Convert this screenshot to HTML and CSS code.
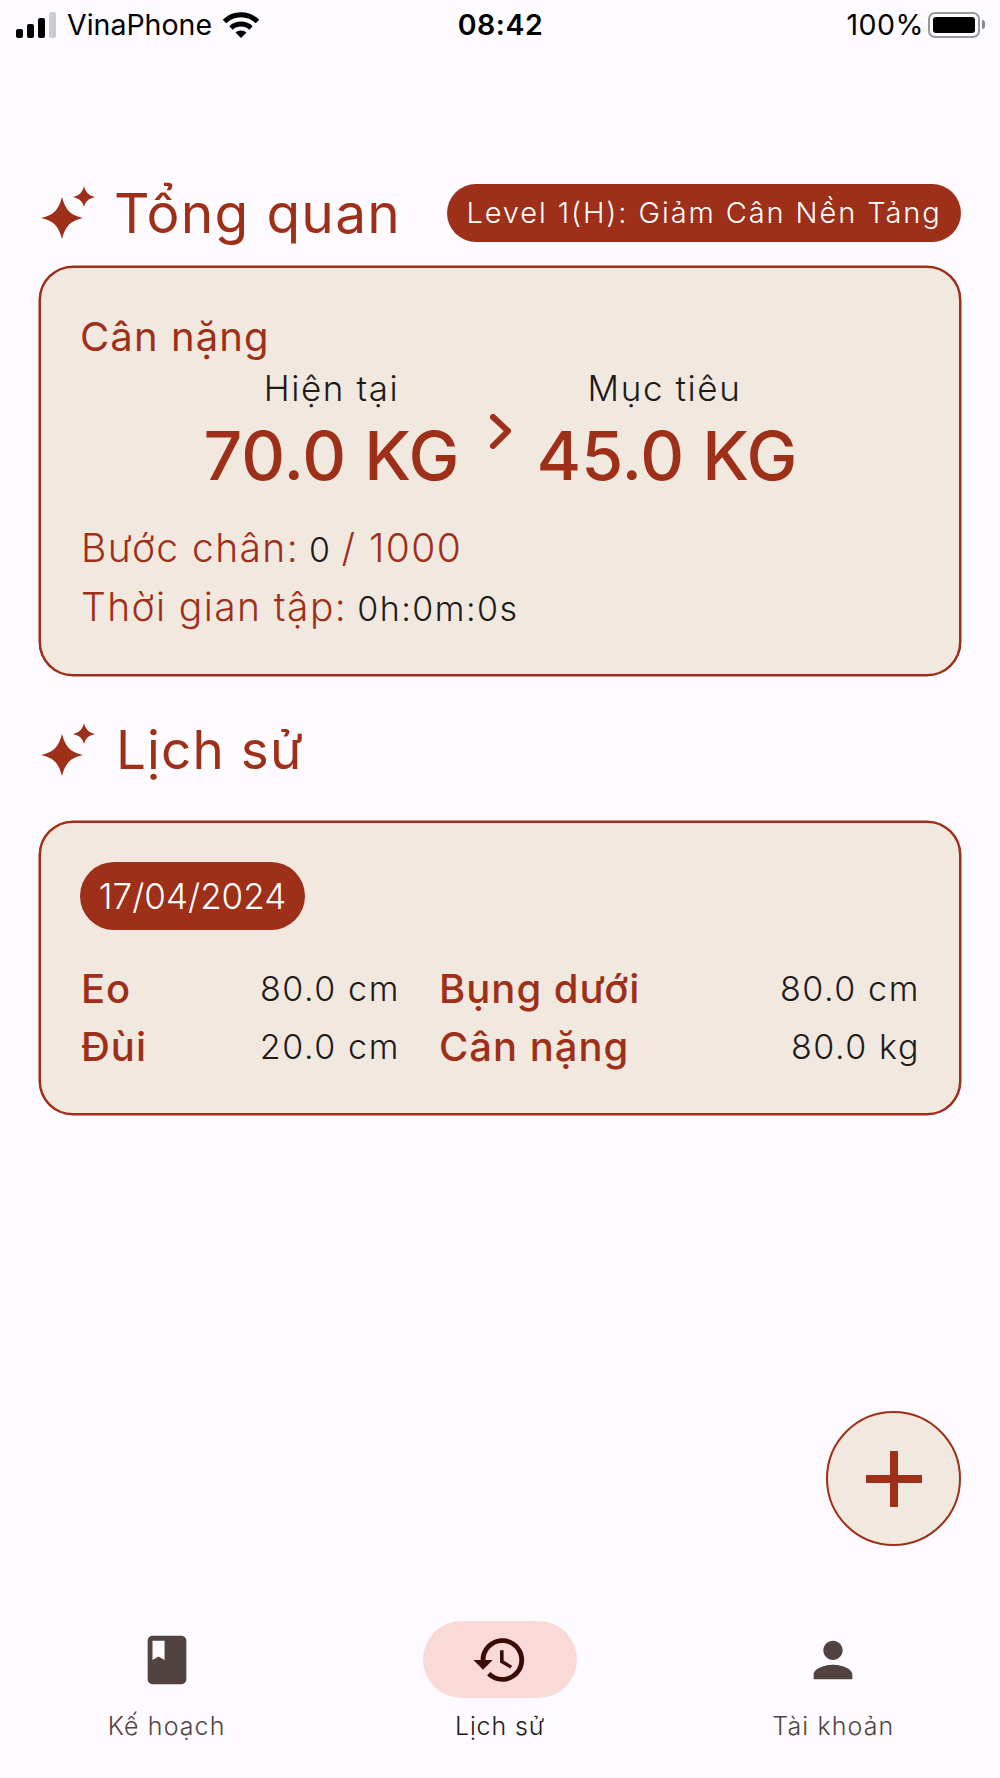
FILE: index.html
```html
<!DOCTYPE html>
<html lang="en">
<head>
  <meta charset="UTF-8" />
  <meta name="viewport" content="width=device-width, initial-scale=1" />
  <title>Lịch sử</title>
  <link rel="stylesheet" href="styles.css">
</head>
<body>

  <div class="status-bar">
    <div class="status-left">
      <div class="signal">
        <span class="bar bar1"></span>
        <span class="bar bar2"></span>
        <span class="bar bar3"></span>
        <span class="bar bar4"></span>
      </div>
      <span class="carrier">VinaPhone</span>
      <svg class="wifi" viewBox="0 0 38 27">
        <path d="M2.5 10.5C11.5 1.5 26.5 1.5 35.5 10.5" fill="none" stroke="#000" stroke-width="5" />
        <path d="M9 17C14.500 11.800 23.500 11.800 29 17" fill="none" stroke="#000" stroke-width="5" />
        <path d="M13.500 21.500C16.500 18.800 21.500 18.800 24.500 21.500L19 27Z" fill="#000" />
      </svg>
    </div>
    <div class="clock">08:42</div>
    <div class="status-right">
      <span class="percent">100%</span>
      <div class="battery"><div class="battery-fill"></div></div>
      <div class="battery-nub"></div>
    </div>
  </div>

  <main class="content">
    <div class="section-head overview-head">
      <svg class="sparkle" viewBox="0 0 54 54">
        <path d="M21 11C24.500 24 29 29 42 32C29 35 24.500 40 21 53C17.500 40 13 35 0 32C13 29 17.500 24 21 11Z" fill="#9e2f18" />
        <path d="M43 0C44.500 6 47.500 9.500 54 11C47.500 12.500 44.500 15.500 43 21C41.500 15.500 38.500 12.500 32 11C38.500 9.500 41.500 6 43 0Z" fill="#9e2f18" />
      </svg>
      <h2>Tổng quan</h2>
      <div class="level-pill">Level 1(H): Giảm Cân Nền Tảng</div>
    </div>

    <section class="card overview-card">
      <div class="card-title">Cân nặng</div>
      <div class="compare">
        <div class="compare-col">
          <div class="compare-label">Hiện tại</div>
          <div class="compare-value">70.0 KG</div>
        </div>
        <svg class="chevron" viewBox="0 0 21 35">
          <path d="M3 3L18 17L3 32" fill="none" stroke="#9e2f18" stroke-width="6" stroke-linecap="round" stroke-linejoin="round" />
        </svg>
        <div class="compare-col">
          <div class="compare-label">Mục tiêu</div>
          <div class="compare-value">45.0 KG</div>
        </div>
      </div>
      <div class="stat steps">
        <span class="stat-label">Bước chân:</span>
        <span class="stat-value">0</span>
        <span class="stat-label">/ 1000</span>
      </div>
      <div class="stat">
        <span class="stat-label">Thời gian tập:</span>
        <span class="stat-value">0h:0m:0s</span>
      </div>
    </section>

    <div class="section-head history-head">
      <svg class="sparkle" viewBox="0 0 54 54">
        <path d="M21 11C24.500 24 29 29 42 32C29 35 24.500 40 21 53C17.500 40 13 35 0 32C13 29 17.500 24 21 11Z" fill="#9e2f18" />
        <path d="M43 0C44.500 6 47.500 9.500 54 11C47.500 12.500 44.500 15.500 43 21C41.500 15.500 38.500 12.500 32 11C38.500 9.500 41.500 6 43 0Z" fill="#9e2f18" />
      </svg>
      <h2>Lịch sử</h2>
    </div>

    <section class="card history-card">
      <div class="date-pill">17/04/2024</div>
      <div class="measures">
        <span class="m-label">Eo</span>
        <span class="m-value">80.0 cm</span>
        <span class="m-label">Bụng dưới</span>
        <span class="m-value">80.0 cm</span>
        <span class="m-label">Đùi</span>
        <span class="m-value">20.0 cm</span>
        <span class="m-label">Cân nặng</span>
        <span class="m-value">80.0 kg</span>
      </div>
    </section>
  </main>

  <button class="fab" type="button">
    <svg viewBox="0 0 56 56">
      <path d="M24 0H32V24H56V32H32V56H24V32H0V24H24Z" fill="#9e2f18" />
    </svg>
  </button>

  <nav class="bottom-nav">
    <div class="nav-item">
      <div class="nav-icon">
        <svg viewBox="0 0 24 24"><path d="M18 2H6c-1.100 0-2 .9-2 2v16c0 1.100.9 2 2 2h12c1.100 0 2-.9 2-2V4c0-1.100-.9-2-2-2zM6 4h5v8l-2.500-1.500L6 12V4z" fill="#524340" /></svg>
      </div>
      <div class="nav-label">Kế hoạch</div>
    </div>
    <div class="nav-item active">
      <div class="nav-icon">
        <svg viewBox="0 0 24 24"><path d="M13 3c-4.970 0-9 4.030-9 9H1l3.890 3.890.07.14L9 12H6c0-3.870 3.130-7 7-7s7 3.130 7 7-3.130 7-7 7c-1.930 0-3.680-.79-4.940-2.060l-1.420 1.420C8.270 19.990 10.510 21 13 21c4.970 0 9-4.030 9-9s-4.030-9-9-9zm-1 5v5l4.280 2.540.72-1.210-3.500-2.080V8H12z" fill="#3a0a04" /></svg>
      </div>
      <div class="nav-label">Lịch sử</div>
    </div>
    <div class="nav-item">
      <div class="nav-icon">
        <svg viewBox="0 0 24 24"><path d="M12 12c2.210 0 4-1.790 4-4s-1.790-4-4-4-4 1.790-4 4 1.790 4 4 4zm0 2c-2.670 0-8 1.340-8 4v2h16v-2c0-2.660-5.330-4-8-4z" fill="#524340" /></svg>
      </div>
      <div class="nav-label">Tài khoản</div>
    </div>
  </nav>

</body>
</html>
```

FILE: styles.css
```css
* {
  box-sizing: border-box;
}

body {
  margin: 0;
  width: 1000px;
  height: 1778px;
  position: relative;
  display: flex;
  flex-direction: column;
  background: #fdfbff;
  color: #201a19;
  font-family: Inter, "Noto Sans", sans-serif;
  overflow: hidden;
}

/* status bar */
.status-bar {
  height: 52px;
  padding: 0 15px 3px 16px;
  display: flex;
  align-items: center;
  justify-content: space-between;
  color: #000;
  font-size: 28.5px;
}

.status-left,
.status-right {
  width: 300px;
  display: flex;
  align-items: center;
}

.status-right {
  justify-content: flex-end;
}

.signal {
  display: flex;
  align-items: flex-end;
  gap: 4px;
  height: 26px;
}

.bar {
  width: 7px;
  background: #000;
  border-radius: 2px;
}

.bar1 { height: 9px; }
.bar2 { height: 14px; }
.bar3 { height: 20px; }
.bar4 { height: 26px; background: #ccc; }

.carrier {
  margin-left: 11px;
}

.wifi {
  width: 38px;
  height: 27px;
  margin-left: 10px;
}

.clock {
  font-weight: 600;
  letter-spacing: 0.5px;
}

.percent {
  margin-right: 4px;
  letter-spacing: 0.5px;
}

.battery {
  width: 52px;
  height: 26px;
  padding: 3px;
  border: 2px solid #999;
  border-radius: 7px;
}

.battery-fill {
  height: 100%;
  background: #000;
  border-radius: 3px;
}

.battery-nub {
  width: 3px;
  height: 9px;
  margin-left: 2px;
  background: #888;
  border-radius: 0 3px 3px 0;
}

/* main */
.content {
  padding: 0 39px;
  flex: 1;
}

.section-head {
  display: flex;
  align-items: center;
}

.overview-head {
  margin-top: 132px;
  height: 58px;
}

.history-head {
  margin-top: 46px;
  height: 56px;
}

.sparkle {
  width: 54px;
  height: 54px;
  margin-left: 2px;
}

h2 {
  margin: 0 0 0 19px;
  color: #9e2f18;
  font-size: 55px;
  line-height: 58px;
  font-weight: 400;
  letter-spacing: 1.3px;
}

.history-head h2 {
  margin-left: 21px;
  font-size: 53px;
  letter-spacing: 1.1px;
}

.level-pill {
  margin-left: auto;
  height: 58px;
  width: 514px;
  border-radius: 29px;
  background: #9e2f18;
  color: #fff;
  font-size: 29px;
  font-weight: 300;
  line-height: 58px;
  text-align: center;
  letter-spacing: 1.9px;
  white-space: nowrap;
}

.card {
  background: #f1e8e0;
  border: 2px solid #9e2f18;
  box-shadow: 0 0 0 0.5px #9e2f18;
  border-radius: 34px;
  padding: 0 40px;
}

.overview-card {
  margin-top: 24px;
  height: 410px;
  padding-top: 45px;
}

.card-title {
  color: #9e2f18;
  font-size: 40px;
  line-height: 48px;
  font-weight: 400;
  letter-spacing: 1.1px;
  margin-left: -1px;
}

.compare {
  display: flex;
  justify-content: center;
  margin-top: 7px;
  padding-right: 4px;
}

.compare-col {
  width: 256px;
  text-align: center;
}

.compare-label {
  font-size: 35px;
  font-weight: 300;
  line-height: 40px;
  letter-spacing: 1.6px;
}

.compare-value {
  margin-top: 7px;
  color: #9e2f18;
  font-size: 68px;
  line-height: 80px;
  font-weight: 500;
  white-space: nowrap;
}

.chevron {
  width: 21px;
  height: 35px;
  margin: 46px 26px 0 30px;
}

.stat {
  display: flex;
  align-items: baseline;
  gap: 10px;
  line-height: 57px;
  white-space: nowrap;
}

.steps {
  margin-top: 24px;
}

.stat-label {
  color: #9e2f18;
  font-size: 39px;
  font-weight: 300;
  letter-spacing: 1.4px;
}

.stat-value {
  font-size: 34px;
  font-weight: 300;
  letter-spacing: 1.5px;
}

.history-card {
  margin-top: 43px;
  height: 294px;
  padding-top: 39px;
}

.date-pill {
  width: 225px;
  height: 68px;
  margin-left: -1px;
  border-radius: 34px;
  background: #9e2f18;
  color: #fff;
  font-size: 35px;
  font-weight: 300;
  line-height: 68px;
  text-align: center;
}

.measures {
  display: grid;
  grid-template-columns: 150px 168px 198px 1fr;
  line-height: 58px;
  margin-top: 30px;
}

.m-label {
  color: #9e2f18;
  font-size: 40px;
  font-weight: 450;
  letter-spacing: 1px;
}

.m-label:nth-child(3),
.m-label:nth-child(7) {
  margin-left: 40px;
  white-space: nowrap;
}

.m-value {
  margin-right: -1px;
  font-size: 34px;
  font-weight: 300;
  text-align: right;
  letter-spacing: 1.6px;
}

/* floating button */
.fab {
  position: absolute;
  left: 826px;
  top: 1411px;
  width: 135px;
  height: 135px;
  padding: 0;
  display: flex;
  align-items: center;
  justify-content: center;
  background: #f1e8e0;
  border: 2px solid #9e2f18;
  border-radius: 50%;
}

.fab svg {
  width: 56px;
  height: 56px;
}

/* bottom nav */
.bottom-nav {
  height: 157px;
  display: grid;
  grid-template-columns: repeat(3, 1fr);
}

.nav-item {
  display: flex;
  flex-direction: column;
  align-items: center;
}

.nav-icon {
  width: 154px;
  height: 77px;
  border-radius: 39px;
  display: flex;
  align-items: center;
  justify-content: center;
}

.nav-icon svg {
  width: 58px;
  height: 58px;
}

.active .nav-icon {
  background: #f9dad6;
}

.nav-label {
  margin-top: 10px;
  color: #524340;
  font-size: 25px;
  font-weight: 300;
  line-height: 36px;
  letter-spacing: 1.1px;
}

.active .nav-label {
  color: #231918;
  letter-spacing: 0.9px;
}
```
